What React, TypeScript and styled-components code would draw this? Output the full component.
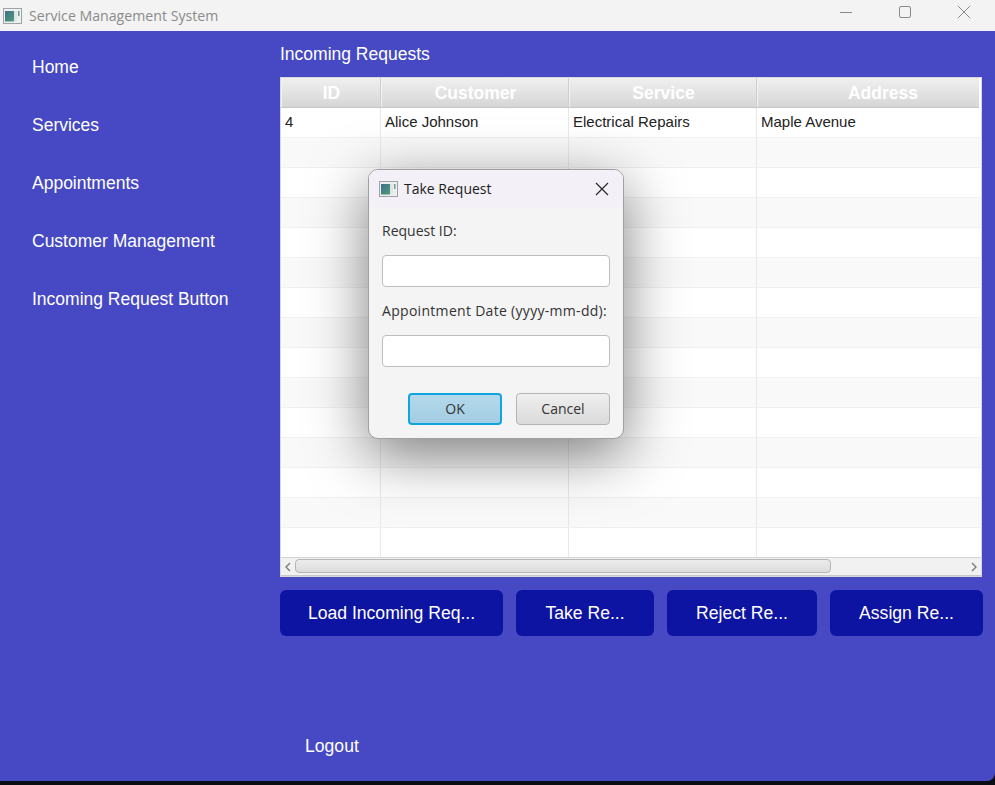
import React from 'react'
import styled, { createGlobalStyle } from 'styled-components'

const indigo = '#4649c3'
const navy = '#0e14a2'
const uiFont = '"Open Sans", "Noto Sans", sans-serif'
const appFont = '"Liberation Sans", Arial, sans-serif'

const columns = ['ID', 'Customer', 'Service', 'Address']
const navItems = ['Home', 'Services', 'Appointments', 'Customer Management', 'Incoming Request Button']
const actions = [
  { label: 'Load Incoming Req...', width: 223 },
  { label: 'Take Re...', width: 138 },
  { label: 'Reject Re...', width: 150 },
  { label: 'Assign Re...', width: 153 },
]
const rows = [['4', 'Alice Johnson', 'Electrical Repairs', 'Maple Avenue'], ...Array.from({ length: 14 }, () => ['', '', '', ''])]

const AppIcon = () => (
  <svg width="19" height="16" viewBox="0 0 19 16">
    <defs>
      <linearGradient id="appIconFill" x1="0" y1="0" x2="1" y2="1">
        <stop offset="0" stopColor="#3f6f8c" />
        <stop offset="1" stopColor="#4f9c78" />
      </linearGradient>
    </defs>
    <rect x="0.5" y="0.5" width="18" height="15" fill="#eef0f0" stroke="#9ea4a6" />
    <rect x="2" y="3" width="9" height="10.5" fill="url(#appIconFill)" />
    <rect x="11" y="3" width="3" height="10.5" fill="#dfe6e6" />
    <rect x="15" y="3" width="1.5" height="5" fill="#6f9a90" />
  </svg>
)

export default function App() {
  return (
    <>
      <GlobalStyle />
      <Desktop>
        <Window>
          <TitleBar>
            <AppIcon />
            <TitleText>Service Management System</TitleText>
            <WindowControls>
              <svg width="14" height="14" viewBox="0 0 14 14"><path d="M1 7.5h12" stroke="#8a8a8a" strokeWidth="1" /></svg>
              <svg width="14" height="14" viewBox="0 0 14 14"><rect x="1.5" y="1.5" width="11" height="11" rx="1.5" fill="none" stroke="#8a8a8a" /></svg>
              <svg width="14" height="14" viewBox="0 0 14 14"><path d="M1 1l12 12M13 1L1 13" stroke="#8a8a8a" strokeWidth="1" /></svg>
            </WindowControls>
          </TitleBar>
          <Body>
            <Sidebar>
              {navItems.map(item => <NavItem key={item}>{item}</NavItem>)}
            </Sidebar>
            <Content>
              <Heading>Incoming Requests</Heading>
              <TableFrame>
                <HeaderRow>
                  {columns.map(c => <HeaderCell key={c}>{c}</HeaderCell>)}
                </HeaderRow>
                {rows.map((row, i) => (
                  <Row key={i} $odd={i % 2 === 1}>
                    {row.map((cell, j) => <Cell key={j}>{cell}</Cell>)}
                  </Row>
                ))}
                <ScrollBar>
                  <svg width="14" height="18" viewBox="0 0 14 18"><path d="M9 5L5 9l4 4" fill="none" stroke="#777" strokeWidth="1.3" /></svg>
                  <ScrollTrack><ScrollThumb /></ScrollTrack>
                  <svg width="14" height="18" viewBox="0 0 14 18"><path d="M5 5l4 4-4 4" fill="none" stroke="#777" strokeWidth="1.3" /></svg>
                </ScrollBar>
              </TableFrame>
              <Actions>
                {actions.map(a => <ActionButton key={a.label} $width={a.width}>{a.label}</ActionButton>)}
              </Actions>
              <Logout>Logout</Logout>
            </Content>
            <Dialog>
              <DialogTitle>
                <AppIcon />
                <DialogTitleText>Take Request</DialogTitleText>
                <svg width="14" height="14" viewBox="0 0 14 14"><path d="M1 1l12 12M13 1L1 13" stroke="#222" strokeWidth="1.1" /></svg>
              </DialogTitle>
              <DialogBody>
                <FieldLabel>Request ID:</FieldLabel>
                <Field />
                <FieldLabel $tracking={0.3}>Appointment Date (yyyy-mm-dd):</FieldLabel>
                <Field />
                <DialogButtons>
                  <DialogButton $primary>OK</DialogButton>
                  <DialogButton>Cancel</DialogButton>
                </DialogButtons>
              </DialogBody>
            </Dialog>
          </Body>
        </Window>
      </Desktop>
    </>
  )
}

const GlobalStyle = createGlobalStyle`
  html, body { margin: 0; padding: 0; background: #0b0d14; overflow: hidden; }
  * { box-sizing: border-box; }
`

const Desktop = styled.div`
  width: 995px;
  height: 785px;
  background: #0b0d14;
`

const Window = styled.div`
  width: 995px;
  height: 781px;
  display: flex;
  flex-direction: column;
  background: ${indigo};
  border-radius: 0 0 8px 0;
  overflow: hidden;
`

const TitleBar = styled.div`
  height: 31px;
  flex: none;
  display: flex;
  align-items: center;
  padding-left: 3px;
  background: #f3f3f3;
`

const TitleText = styled.span`
  margin-left: 7px;
  font: 14.15px ${uiFont};
  color: #8b8b8b;
`

const WindowControls = styled.div`
  margin-left: auto;
  margin-right: 24px;
  display: flex;
  align-items: center;
  gap: 45px;
  margin-top: -7px;
`

const Body = styled.div`
  flex: 1;
  position: relative;
  display: flex;
`

const Sidebar = styled.nav`
  width: 280px;
  flex: none;
  display: flex;
  flex-direction: column;
  gap: 38px;
  padding: 26px 0 0 32px;
`

const NavItem = styled.div`
  height: 20px;
  font: 17.5px/20px ${appFont};
  color: #fff;
`

const Content = styled.main`
  flex: 1;
  display: flex;
  flex-direction: column;
  padding-right: 12px;
`

const Heading = styled.h1`
  margin: 13px 0 13px;
  font: 400 17.5px/20px ${appFont};
  color: #fff;
`

const TableFrame = styled.div`
  width: 702px;
  height: 500px;
  background: #fff;
  border: 1px solid #d8d8d8;
`

const tableColumns = '100px 188px 188px 250px'

const HeaderRow = styled.div`
  display: grid;
  grid-template-columns: ${tableColumns};
  height: 30px;
  margin-right: 2px;
  overflow: hidden;
  background: linear-gradient(#f0f0f0, #d6d6d6);
  border-bottom: 1px solid #c6c6c6;
`

const HeaderCell = styled.div`
  display: flex;
  align-items: center;
  justify-content: center;
  padding: 1px 0 0 2px;
  font: 700 17.5px ${appFont};
  color: #fff;
  border-right: 1px solid #cfcfcf;
  box-shadow: inset 1px 0 #f2f2f2;
  &:last-child { border-right: none; }
`

const Row = styled.div<{ $odd: boolean }>`
  display: grid;
  grid-template-columns: ${tableColumns};
  height: 30px;
  overflow: hidden;
  background: ${p => (p.$odd ? '#f9f9f9' : '#fff')};
  border-bottom: 1px solid #f0f0f0;
`

const Cell = styled.div`
  padding: 0 4px;
  font: 15px/28px ${appFont};
  color: #222;
  border-right: 1px solid #e8e8e8;
  &:last-child { border-right: none; }
`

const ScrollBar = styled.div`
  height: 19px;
  margin-top: -1px;
  display: flex;
  align-items: center;
  background: #f1f1f1;
  border-top: 1px solid #d4d4d4;
  border-bottom: 1px solid #c8c8c8;
`

const ScrollTrack = styled.div`
  flex: 1;
  height: 100%;
`

const ScrollThumb = styled.div`
  width: 536px;
  height: 14px;
  margin-top: 1px;
  border: 1px solid #b5b5b5;
  border-radius: 4px;
  background: linear-gradient(#ececec, #dcdcdc);
`

const Actions = styled.div`
  display: flex;
  gap: 13px;
  margin-top: 13px;
`

const ActionButton = styled.button<{ $width: number }>`
  width: ${p => p.$width}px;
  height: 46px;
  padding: 0;
  border: none;
  border-radius: 6px;
  background: ${navy};
  font: 17.6px ${appFont};
  color: #fff;
`

const Logout = styled.div`
  margin: 100px 0 0 25px;
  font: 17.6px/20px ${appFont};
  color: #fff;
`

const Dialog = styled.div`
  position: absolute;
  left: 368px;
  top: 138px;
  width: 256px;
  height: 270px;
  background: #f4f4f4;
  border: 1px solid #a0a0a0;
  border-radius: 10px;
  overflow: hidden;
  box-shadow: 0 16px 58px rgba(0, 0, 0, 0.5);
`

const DialogTitle = styled.div`
  height: 37px;
  display: flex;
  align-items: center;
  padding: 0 14px 0 10px;
  background: #f3f0f7;
`

const DialogTitleText = styled.span`
  flex: 1;
  margin-left: 6px;
  font: 14px ${uiFont};
  color: #1c1c1c;
`

const DialogBody = styled.div`
  padding: 14px 13px 0 13px;
`

const FieldLabel = styled.div<{ $tracking?: number }>`
  height: 20px;
  font: 14px/20px ${uiFont};
  letter-spacing: ${p => p.$tracking ?? 0}px;
  color: #333;
`

const Field = styled.div`
  height: 32px;
  margin: 14px 0 14px;
  background: #fff;
  border: 1px solid #bdbdbd;
  border-radius: 4px;
`

const DialogButtons = styled.div`
  display: flex;
  justify-content: flex-end;
  gap: 14px;
  margin-top: 26px;
`

const DialogButton = styled.button<{ $primary?: boolean }>`
  width: 94px;
  height: 32px;
  padding: 0 0 2px;
  border-radius: 4px;
  border: ${p => (p.$primary ? '2px solid #10a5dc' : '1px solid #b4b4b4')};
  background: ${p => (p.$primary ? 'linear-gradient(#b4d8ea, #a3cde2)' : 'linear-gradient(#efefef, #dadada)')};
  font: 14px ${uiFont};
  color: #333;
`
